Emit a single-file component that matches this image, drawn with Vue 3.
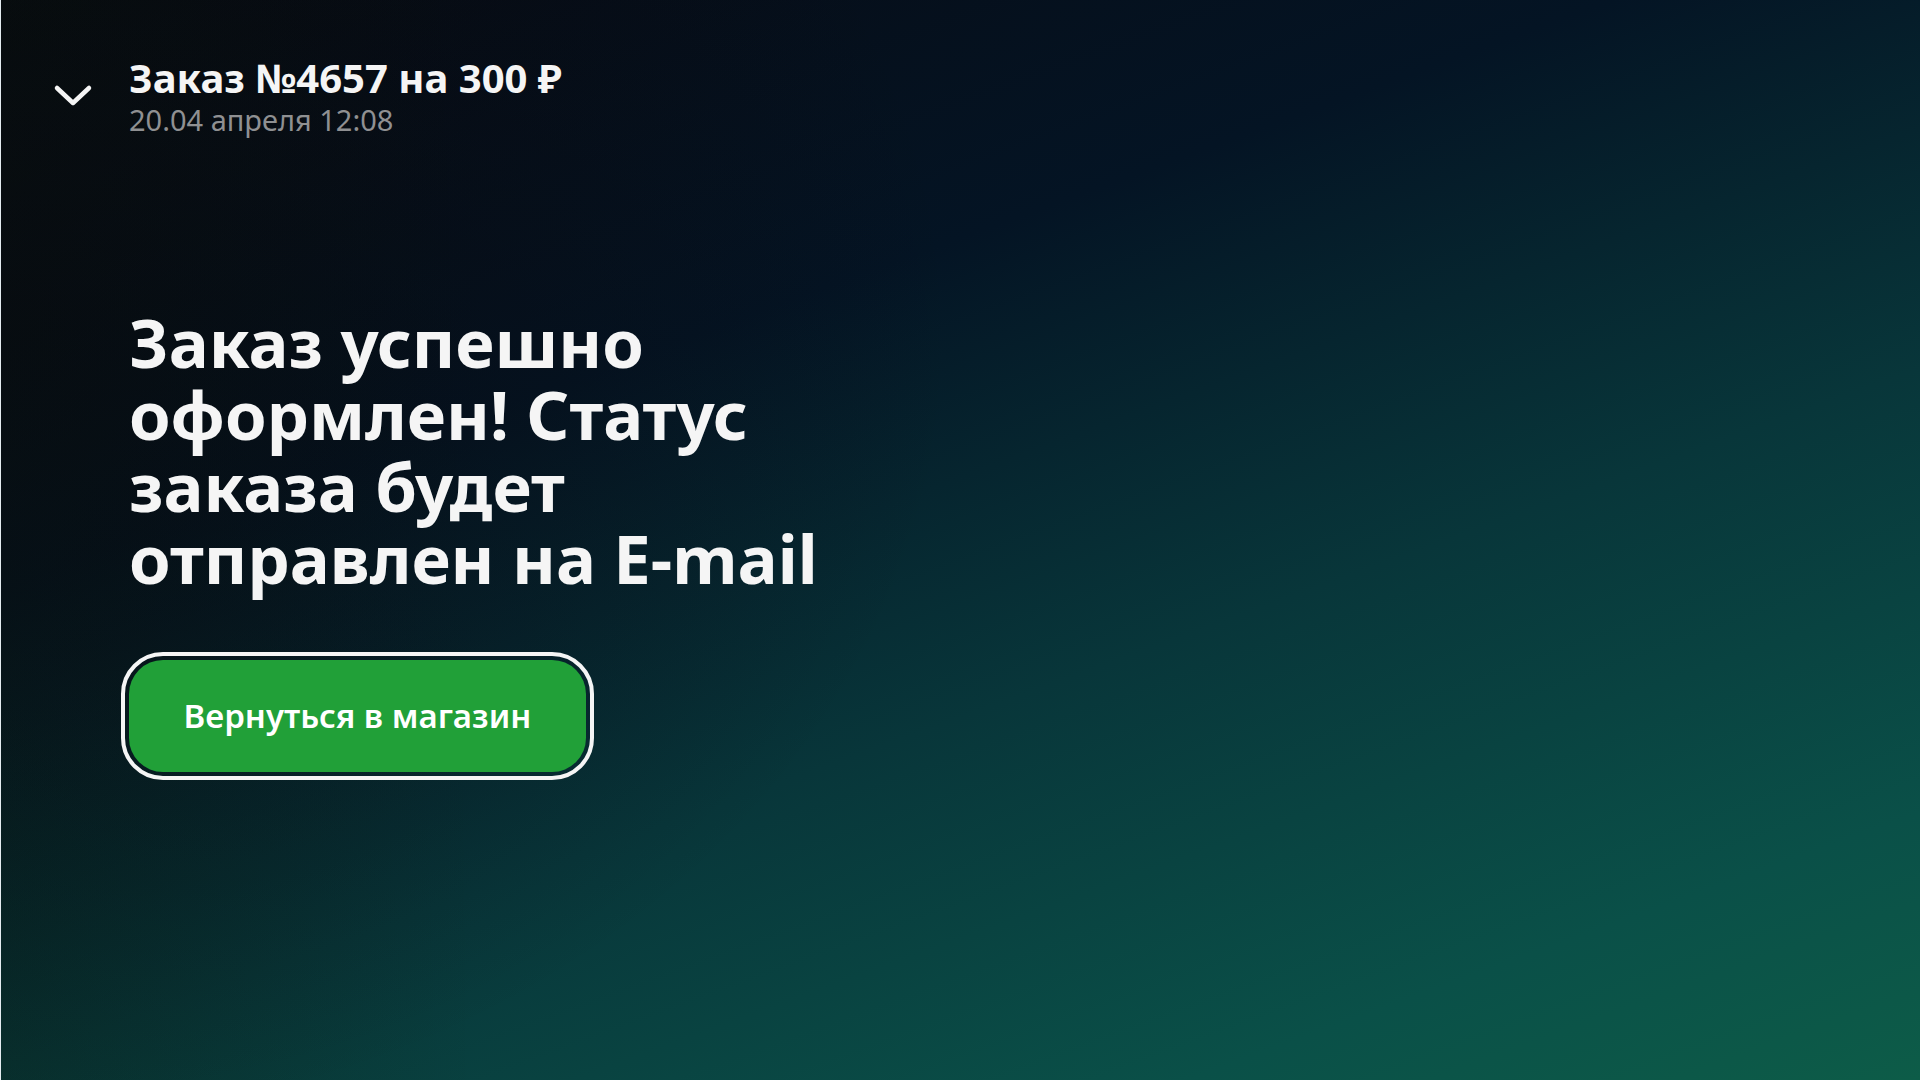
<script setup>
const order = {
  title: 'Заказ №4657 на 300 ₽',
  date: '20.04 апреля 12:08',
}
</script>

<template>
  <div class="screen">
    <header class="header">
      <button class="collapse" type="button" aria-label="Свернуть">
        <svg width="40" height="24" viewBox="0 0 40 24" fill="none" aria-hidden="true">
          <path d="M4 4 20 19 36 4" stroke="#f5f5f5" stroke-width="4.5" stroke-linecap="round" stroke-linejoin="round" />
        </svg>
      </button>
      <div>
        <h1 class="title">{{ order.title }}</h1>
        <p class="date">{{ order.date }}</p>
      </div>
    </header>
    <main class="content">
      <h2 class="message">Заказ успешно оформлен! Статус заказа будет отправлен на E-mail</h2>
      <button class="action" type="button">Вернуться в магазин</button>
    </main>
  </div>
</template>

<style>
body {
  margin: 0;
}
</style>

<style scoped>
.screen {
  box-sizing: border-box;
  min-height: 100vh;
  border-left: 1px solid #e4ecf0;
  padding-top: 54px;
  color: #f5f5f5;
  font-family: "Noto Sans", "Open Sans", sans-serif;
  background:
    radial-gradient(ellipse 50% 75% at 0% 30%, rgba(8, 8, 12, 0.6) 0%, rgba(8, 8, 12, 0) 100%),
    linear-gradient(90deg, rgba(8, 28, 8, 0.25) 0%, rgba(8, 28, 8, 0) 25%),
    linear-gradient(160deg, #070a12 0%, #041424 33%, #08363a 60%, #0a5048 85%, #0d5c48 100%);
}

.header {
  display: flex;
  align-items: center;
}

.collapse {
  display: flex;
  justify-content: center;
  width: 128px;
  padding: 0 0 0 16px;
  border: 0;
  background: none;
}

.title {
  margin: 0;
  font-size: 40px;
  font-weight: 700;
  line-height: 48px;
}

.date {
  margin: 0;
  font-size: 29px;
  line-height: 36px;
  color: #8f9092;
}

.content {
  display: flex;
  flex-direction: column;
  align-items: flex-start;
  padding: 168px 0 0 128px;
}

.message {
  max-width: 720px;
  margin: 0;
  font-size: 67px;
  font-weight: 700;
  line-height: 72px;
}

.action {
  min-width: 457px;
  height: 112px;
  margin-top: 66px;
  padding: 0 48px;
  border: 0;
  border-radius: 34px;
  outline: 4px solid #f5f5f5;
  outline-offset: 4px;
  background: #21a038;
  color: #fff;
  font: 600 33px/40px "Noto Sans", "Open Sans", sans-serif;
}
</style>
